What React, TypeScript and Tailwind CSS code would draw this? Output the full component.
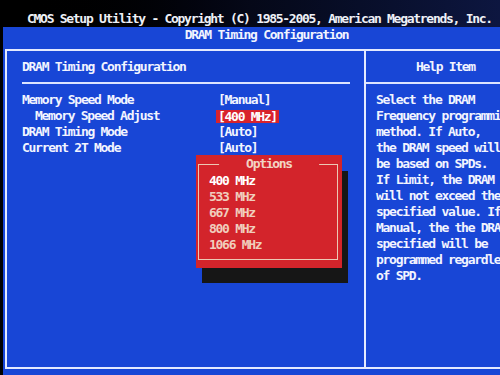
const SETTINGS = [
  { label: 'Memory Speed Mode', value: '[Manual]', indent: false, active: false },
  { label: 'Memory Speed Adjust', value: '[400 MHz]', indent: true, active: true },
  { label: 'DRAM Timing Mode', value: '[Auto]', indent: false, active: false },
  { label: 'Current 2T Mode', value: '[Auto]', indent: false, active: false }
] as const;

const HELP_LINES = [
  'Select the DRAM',
  'Frequency programming',
  'method. If Auto,',
  'the DRAM speed will',
  'be based on SPDs.',
  'If Limit, the DRAM',
  'will not exceed the',
  'specified value. If',
  'Manual, the the DRAM',
  'specified will be',
  'programmed regardless',
  'of SPD.'
];

const OPTIONS = ['400 MHz', '533 MHz', '667 MHz', '800 MHz', '1066 MHz'];

export default function App(): JSX.Element {
  return (
    <div className="relative flex h-[375px] w-[500px] flex-col overflow-hidden bg-black font-['DejaVu_Sans_Mono',monospace] text-[13px] font-bold tracking-[-1.28px] text-[#f2f4ff]">
      {/* top title line on black */}
      <div className="h-[27px] shrink-0 whitespace-nowrap bg-gradient-to-r from-black via-[#050818] to-[#0d1640] pl-[27px] pt-[11px] leading-[16px] text-[#eef0f6]">
        CMOS Setup Utility - Copyright (C) 1985-2005, American Megatrends, Inc.
      </div>

      <div className="ml-[3px] flex flex-1 flex-col bg-[#1846d6]">
        <div className="h-[22px] shrink-0 whitespace-nowrap pl-[30px] text-center leading-[16px]">
          DRAM Timing Configuration
        </div>

        <div className="ml-[2px] flex h-[320px] w-[540px] shrink-0 border-2 border-[#e4eaff]">
          {/* settings column */}
          <div className="w-[357px] shrink-0">
            <div className="h-[31px] whitespace-nowrap pl-[15px] pt-[8px] leading-[16px]">
              DRAM Timing Configuration
            </div>
            <div className="ml-[15px] h-[2px] w-[328px] bg-[#dce4ff]" />
            <div className="pt-[8px]">
              {SETTINGS.map((row) => (
                <div key={row.label} className="flex h-[16px] items-center whitespace-nowrap pl-[15px] leading-[16px]">
                  <span className={row.indent ? 'w-[196px] pl-[13px]' : 'w-[196px]'}>{row.label}</span>
                  {row.active ? (
                    <span className="-ml-[2px] inline-block bg-[#d8232c] px-[2px] leading-[13px] text-white">
                      {row.value}
                    </span>
                  ) : (
                    <span>{row.value}</span>
                  )}
                </div>
              ))}
            </div>
          </div>

          {/* help column */}
          <div className="flex-1 border-l-2 border-[#e4eaff]">
            <div className="h-[31px] whitespace-nowrap pl-[50px] pt-[8px] leading-[16px]">Help Item</div>
            <div className="h-[2px] bg-[#dce4ff]" />
            <div className="pl-[10px] pt-[8px] leading-[16px]">
              {HELP_LINES.map((line) => (
                <div key={line} className="whitespace-nowrap">
                  {line}
                </div>
              ))}
            </div>
          </div>
        </div>
      </div>

      {/* options popup with its drop shadow */}
      <div className="absolute left-[202px] top-[171px] h-[112px] w-[146px] bg-[#161616]" />
      <div className="absolute left-[196px] top-[155px] h-[113px] w-[146px] bg-[#d3242b]">
        <div className="absolute bottom-[8px] left-[2px] right-[4px] top-[9px] border border-[#ecc8b4]" />
        <div className="absolute left-1/2 top-[1px] -translate-x-1/2 bg-[#d3242b] px-[27px] leading-[16px] text-[#f2d4c4]">
          Options
        </div>
        <div className="relative pl-[13px] pt-[18px] leading-[16px]">
          {OPTIONS.map((opt, i) => (
            <div key={opt} className={i === 0 ? 'text-white' : 'text-[#f0cdbd]'}>
              {opt}
            </div>
          ))}
        </div>
      </div>
    </div>
  );
}
